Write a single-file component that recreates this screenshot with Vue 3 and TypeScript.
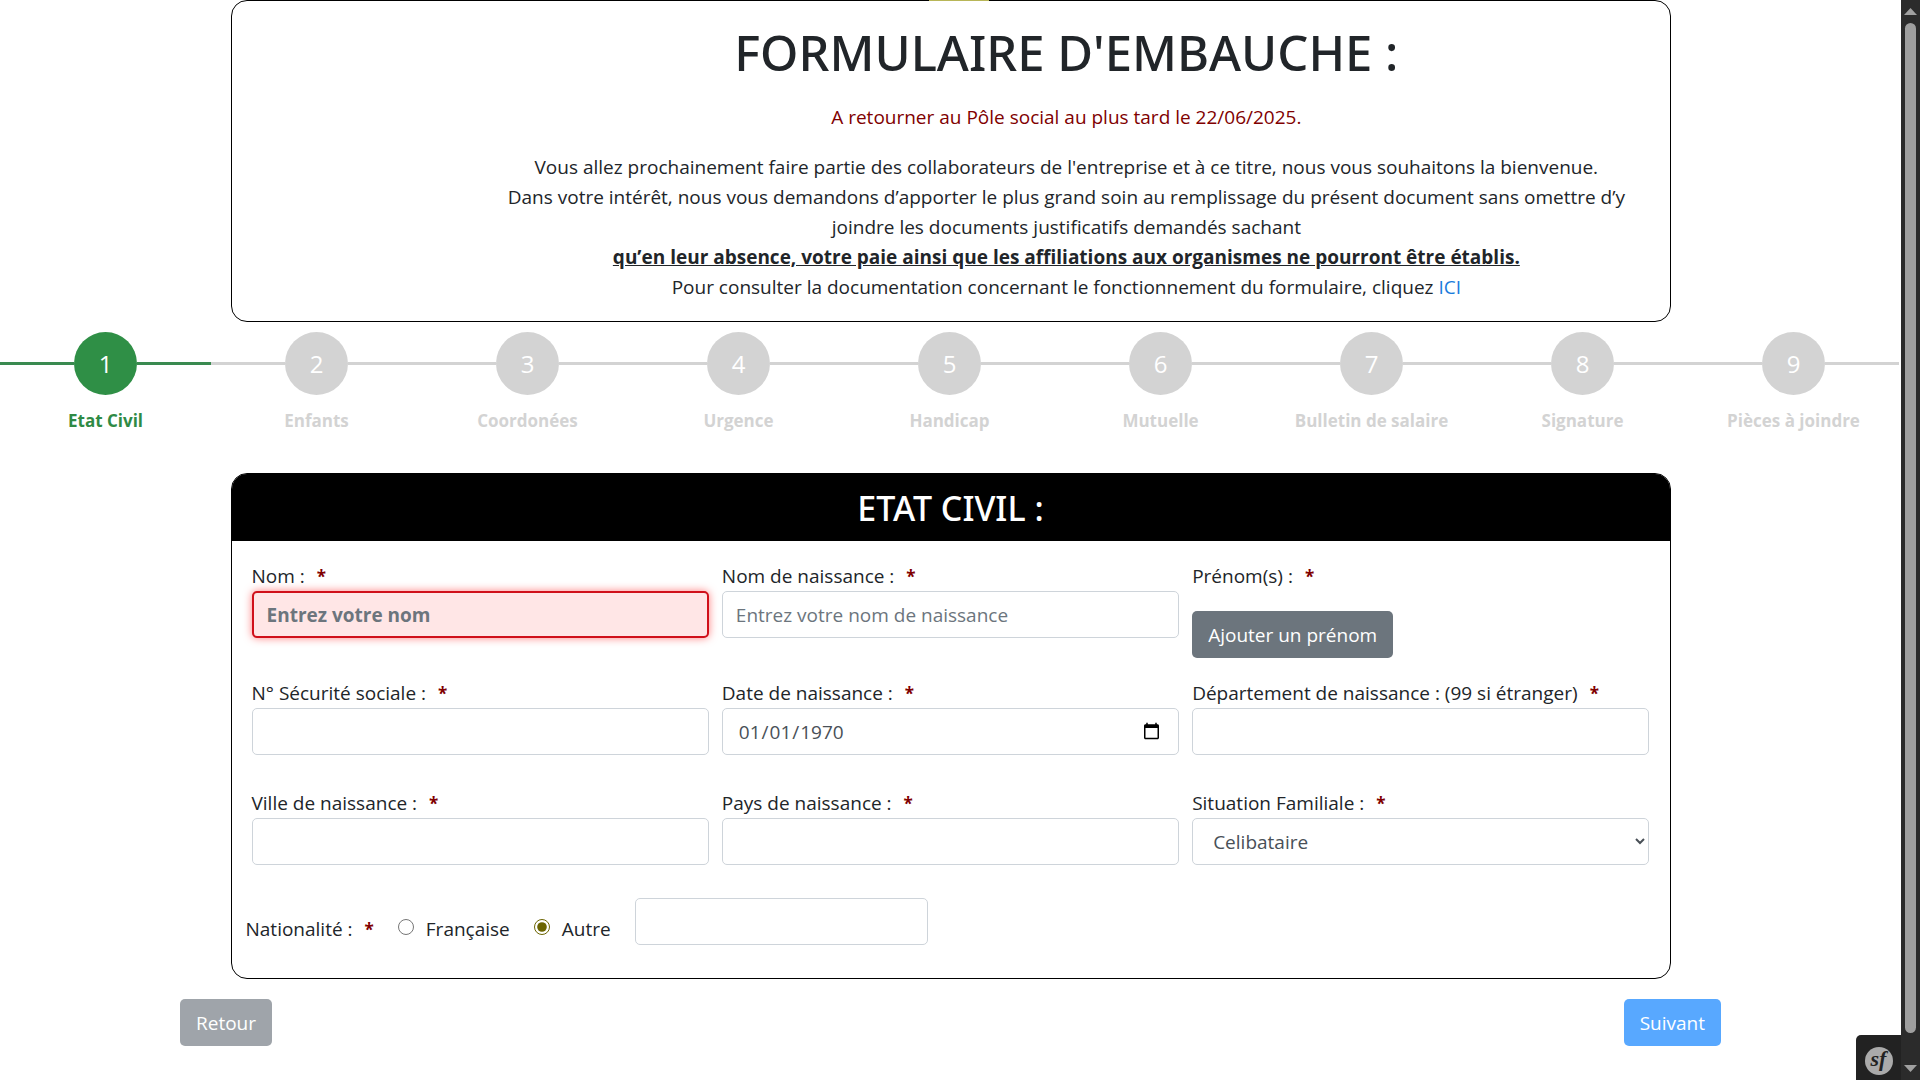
<script setup lang="ts">
import { ref } from 'vue'

interface Step {
  label: string
  active: boolean
}

const steps: Step[] = [
  { label: 'Etat Civil', active: true },
  { label: 'Enfants', active: false },
  { label: 'Coordonées', active: false },
  { label: 'Urgence', active: false },
  { label: 'Handicap', active: false },
  { label: 'Mutuelle', active: false },
  { label: 'Bulletin de salaire', active: false },
  { label: 'Signature', active: false },
  { label: 'Pièces à joindre', active: false },
]

const lastName = ref('')
const birthName = ref('')
const socialNumber = ref('')
const birthDate = ref('1970-01-01')
const department = ref('')
const birthCity = ref('')
const birthCountry = ref('')
const maritalStatus = ref('Celibataire')
const nationality = ref('autre')
const otherNationality = ref('')
</script>

<template>
  <div class="page">
    <main class="content">
      <header class="intro">
        <div class="intro-logo"></div>
        <div class="intro-text">
          <h1>FORMULAIRE D'EMBAUCHE :</h1>
          <p class="deadline">A retourner au Pôle social au plus tard le 22/06/2025.</p>
          <p>
            Vous allez prochainement faire partie des collaborateurs de l'entreprise et à ce titre, nous vous souhaitons la bienvenue.<br />
            Dans votre intérêt, nous vous demandons d’apporter le plus grand soin au remplissage du présent document sans omettre d’y joindre les documents justificatifs demandés sachant<br />
            <strong>qu’en leur absence, votre paie ainsi que les affiliations aux organismes ne pourront être établis.</strong><br />
            Pour consulter la documentation concernant le fonctionnement du formulaire, cliquez <a href="#">ICI</a>
          </p>
        </div>
        <span class="marker"></span>
      </header>

      <ol class="steps">
        <li v-for="(step, i) in steps" :key="step.label" class="step" :class="{ active: step.active }">
          <div class="track">
            <span class="line"></span>
            <span class="dot">{{ i + 1 }}</span>
            <span class="line"></span>
          </div>
          <span class="step-label">{{ step.label }}</span>
        </li>
      </ol>

      <form @submit.prevent>
        <section class="card">
          <h2>ETAT CIVIL :</h2>
          <div class="card-body">
            <div class="row">
              <div class="field">
                <label for="nom">Nom :<b>*</b></label>
                <input id="nom" v-model="lastName" class="control invalid" type="text" placeholder="Entrez votre nom" />
              </div>
              <div class="field">
                <label for="naissance">Nom de naissance :<b>*</b></label>
                <input id="naissance" v-model="birthName" class="control" type="text" placeholder="Entrez votre nom de naissance" />
              </div>
              <div class="field names">
                <label for="prenom">Prénom(s) :<b>*</b></label>
                <button id="prenom" class="btn secondary" type="button">Ajouter un prénom</button>
              </div>
            </div>
            <div class="row">
              <div class="field">
                <label for="secu">N° Sécurité sociale :<b>*</b></label>
                <input id="secu" v-model="socialNumber" class="control" type="text" />
              </div>
              <div class="field">
                <label for="date">Date de naissance :<b>*</b></label>
                <input id="date" v-model="birthDate" class="control" type="date" />
              </div>
              <div class="field">
                <label for="dept">Département de naissance : (99 si étranger)<b>*</b></label>
                <input id="dept" v-model="department" class="control" type="text" />
              </div>
            </div>
            <div class="row">
              <div class="field">
                <label for="ville">Ville de naissance :<b>*</b></label>
                <input id="ville" v-model="birthCity" class="control" type="text" />
              </div>
              <div class="field">
                <label for="pays">Pays de naissance :<b>*</b></label>
                <input id="pays" v-model="birthCountry" class="control" type="text" />
              </div>
              <div class="field">
                <label for="situation">Situation Familiale :<b>*</b></label>
                <select id="situation" v-model="maritalStatus" class="control">
                  <option>Celibataire</option>
                  <option>Marié(e)</option>
                  <option>Divorcé(e)</option>
                </select>
              </div>
            </div>
            <div class="nationality" role="radiogroup" aria-labelledby="nat">
              <span id="nat" class="legend">Nationalité :<b>*</b></span>
              <label class="choice"><input v-model="nationality" type="radio" name="nat" value="francaise" />Française</label>
              <label class="choice"><input v-model="nationality" type="radio" name="nat" value="autre" />Autre</label>
              <input v-model="otherNationality" class="control other" type="text" aria-label="Autre nationalité" />
            </div>
          </div>
        </section>

        <div class="actions">
          <button class="btn secondary muted" type="button">Retour</button>
          <button class="btn primary muted" type="submit">Suivant</button>
        </div>
      </form>
    </main>

    <div class="scrollbar" aria-hidden="true">
      <svg width="13" height="7" viewBox="0 0 13 7"><path d="M6.500 0 13 7H0z" fill="#a0a0a0" /></svg>
      <span class="thumb"></span>
      <svg width="13" height="7" viewBox="0 0 13 7"><path d="M0 0h13L6.500 7z" fill="#a0a0a0" /></svg>
    </div>

    <button class="debug" type="button"><span>sf</span></button>
  </div>
</template>

<style>
body {
  margin: 0;
  background: #fff;
}
</style>

<style scoped>
* {
  box-sizing: border-box;
}

.page {
  display: flex;
  min-height: 100vh;
  font-family: 'Open Sans', 'Noto Sans', sans-serif;
  font-size: 19px;
  line-height: 30px;
  color: #212529;
}

.content {
  flex: 1;
  min-width: 0;
}

.intro {
  position: relative;
  display: flex;
  max-width: 1440px;
  margin: 0 auto;
  padding: 21px 18px 0;
  border: 1px solid #000;
  border-radius: 16px;
}

.intro-logo {
  flex: 1;
}

.intro-text {
  flex: 5;
  padding: 0 16px 0 20px;
  text-align: center;
}

.marker {
  position: absolute;
  top: -1px;
  left: 697px;
  width: 60px;
  height: 1px;
  background: #b8b658;
}

h1 {
  margin: 0 0 20px;
  font-family: 'Noto Sans', sans-serif;
  font-size: 49px;
  font-weight: 500;
  line-height: 60px;
}

p {
  margin: 0 0 20px;
}

p:last-child {
  margin-bottom: 19px;
}

.deadline {
  color: #800000;
}

strong {
  text-decoration: underline;
}

a {
  color: #1a7bdc;
  text-decoration: none;
}

.steps {
  display: flex;
  margin: 10px 2px 0 0;
  padding: 0;
  list-style: none;
}

.step {
  flex: 1;
  text-align: center;
  font-weight: 700;
  font-size: 17px;
  color: #d3d3d3;
}

.track {
  display: flex;
  align-items: center;
}

.line {
  flex: 1;
  height: 3px;
  background: #d3d3d3;
}

.dot {
  width: 63px;
  height: 63px;
  border-radius: 50%;
  background: #d3d3d3;
  color: #fff;
  font-size: 24px;
  font-weight: 400;
  line-height: 63px;
}

.step-label {
  display: block;
  margin-top: 11px;
}

.active {
  color: #2f8a45;
}

.active .dot {
  background: #2f8f46;
}

.active .line {
  background: #3a8a50;
}

.card {
  max-width: 1440px;
  margin: 37px auto 0;
  overflow: hidden;
  border: 1px solid #000;
  border-radius: 16px;
}

h2 {
  margin: 0;
  padding: 13px 0 11px;
  background: #000;
  color: #fff;
  font-family: 'Noto Sans', sans-serif;
  font-size: 34px;
  font-weight: 500;
  line-height: 43px;
  text-align: center;
}

.card-body {
  display: flex;
  flex-direction: column;
  gap: 20px;
  padding: 20px;
}

.row {
  display: flex;
  gap: 13px;
}

.field {
  display: flex;
  flex: 1;
  flex-direction: column;
  min-width: 0;
}

b {
  margin-left: 12px;
  color: #800000;
  font-size: 17px;
  line-height: 20px;
}

.control {
  width: 100%;
  height: 47px;
  margin: 0 0 13px;
  padding: 0 13px;
  border: 1px solid #ced4da;
  border-radius: 5px;
  background: #fff;
  color: #495057;
  font: inherit;
}

.control::placeholder {
  color: #6c757d;
  opacity: 1;
}

input[type='date'] {
  padding: 0 15px;
}

select.control {
  padding: 0 0 0 16px;
}

.invalid {
  border: 2px solid #d0101a;
  background: #ffe6e6;
  font-weight: 700;
  box-shadow: 0 0 8px rgba(255, 0, 0, 0.5);
}

.names {
  align-items: flex-start;
}

.names .btn {
  margin-top: 20px;
}

.btn {
  height: 47px;
  padding: 0 16px;
  border: 0;
  border-radius: 5px;
  color: #fff;
  font: inherit;
}

.secondary {
  background: #6c757d;
}

.primary {
  background: #007bff;
}

.muted {
  opacity: 0.65;
}

.nationality {
  display: flex;
  align-items: flex-start;
  margin-left: -6px;
}

.legend,
.choice {
  padding-top: 16px;
}

.choice {
  display: flex;
  align-items: center;
  margin-left: 24px;
}

.choice input {
  width: 16px;
  height: 16px;
  margin: 0 12px 4px 0;
  accent-color: #6b6400;
}

.nationality .other {
  width: 293px;
  margin-left: 24px;
}

.actions {
  display: flex;
  justify-content: space-between;
  max-width: 1541px;
  margin: 20px auto 0;
}

.scrollbar {
  display: flex;
  flex-direction: column;
  align-items: center;
  gap: 8px;
  width: 19px;
  padding: 8px 0;
  background: #2b2b2b;
}

.scrollbar svg:last-child {
  margin-top: 24px;
}

.thumb {
  flex: 1;
  width: 11px;
  border-radius: 6px;
  background: #9f9f9f;
}

.debug {
  position: fixed;
  right: 19px;
  bottom: 0;
  display: flex;
  align-items: center;
  justify-content: center;
  width: 45px;
  height: 45px;
  padding: 6px 0 0;
  border: 0;
  border-radius: 5px 0 0 0;
  background: #222;
}

.debug span {
  width: 28px;
  height: 28px;
  border-radius: 50%;
  background: #aaa;
  color: #222;
  font: italic 700 22px/24px 'Liberation Serif', serif;
  text-align: center;
}
</style>
